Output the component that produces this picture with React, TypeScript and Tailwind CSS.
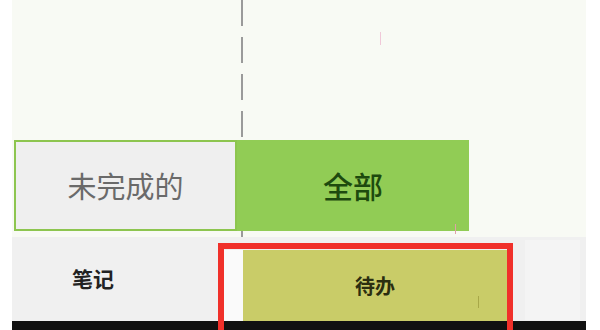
export default function App() {
  const cjk = { fontFamily: '"Noto Sans CJK SC", "Noto Sans", sans-serif' };

  return (
    <div
      className="relative w-[600px] h-[330px] overflow-hidden bg-white"
      style={cjk}
    >
      <div className="ml-[12px] w-[574px] h-full flex flex-col">
        {/* upper panel with the filter buttons */}
        <div className="relative h-[237px] bg-[#f8faf4] pt-[140px] pl-[2px]">
          <div className="absolute left-[229px] top-0 h-full w-[2px] bg-[repeating-linear-gradient(to_bottom,#9a9a9a_0px,#9a9a9a_26px,transparent_26px,transparent_37px)]" />
          <div className="relative flex h-[91px]">
            <div className="w-[223px] h-full flex items-center justify-center border-2 border-[#8dc54f] bg-[#efefef] text-[29px] text-[#6a6a6a]">
              未完成的
            </div>
            <div className="w-[232px] h-full flex items-center justify-center bg-[#91cc55] text-[30px] font-medium text-[#1d4a0e]">
              全部
            </div>
          </div>
        </div>

        {/* bottom tab bar */}
        <div className="flex h-[84px] bg-[#f0f0f0]">
          <div className="w-[162px] flex items-center justify-center text-[21px] font-bold text-[#222]">
            笔记
          </div>
          <div className="w-[44px]" />
          <div className="flex w-[295px] pt-[13px]">
            <div className="w-[25px] bg-[#fafafa]" />
            <div className="flex-1 flex items-center justify-center bg-[#c9cc68] text-[20px] font-bold text-[#2b2e10]">
              待办
            </div>
            <div className="w-[6px]" />
          </div>
          <div className="flex-1 flex pl-[12px] pr-[6px] pt-[3px] pb-[1px]">
            <div className="flex-1 bg-[#f4f4f4]" />
          </div>
        </div>
        <div className="h-[9px] bg-[#111111]" />
      </div>

      {/* small artifacts */}
      <div className="absolute left-[380px] top-[32px] w-[1px] h-[13px] bg-[#f0c8d8]" />
      <div className="absolute left-[455px] top-[224px] w-[1px] h-[10px] bg-[#e0a0a8]" />
      <div className="absolute left-[478px] top-[296px] w-[1px] h-[12px] bg-[#a8a848]" />

      {/* red highlight box */}
      <div className="absolute left-[218px] top-[243px] w-[295px] h-[100px] border-[6px] border-[#f0302a]" />
    </div>
  );
}
